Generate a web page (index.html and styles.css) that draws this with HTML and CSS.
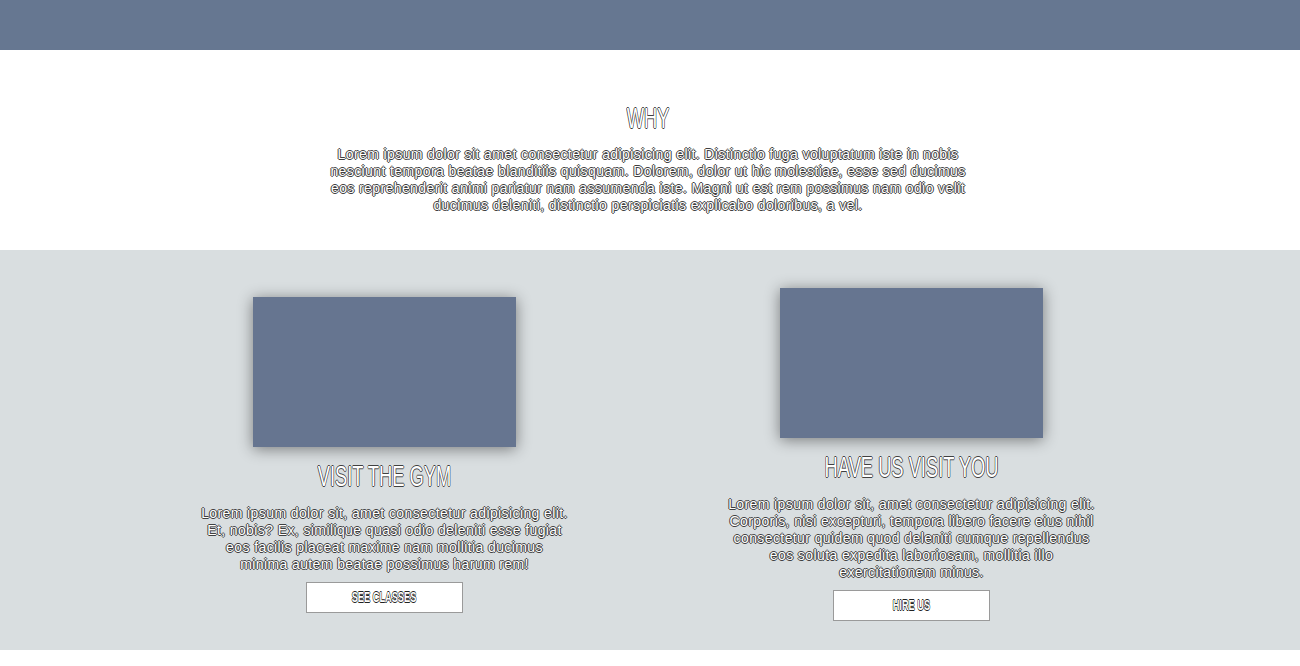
FILE: index.html
```html
<!DOCTYPE html>
<html lang="en">
<head>
<meta charset="utf-8">
<title>Why</title>
<link rel="stylesheet" href="styles.css">
</head>
<body>
<header class="topbar"></header>
<section class="why">
  <h2 class="title"><span class="narrow">WHY</span></h2>
  <p class="lead">Lorem ipsum dolor sit amet consectetur adipisicing elit. Distinctio fuga voluptatum iste in nobis nesciunt tempora beatae blanditiis quisquam. Dolorem, dolor ut hic molestiae, esse sed ducimus eos reprehenderit animi pariatur nam assumenda iste. Magni ut est rem possimus nam odio velit ducimus deleniti, distinctio perspiciatis explicabo doloribus, a vel.</p>
</section>
<section class="services">
  <div class="service-grid">
    <article class="card">
      <div class="card-image"></div>
      <h3 class="title"><span class="narrow">VISIT THE GYM</span></h3>
      <p class="card-text">Lorem ipsum dolor sit, amet consectetur adipisicing elit. Et, nobis? Ex, similique quasi odio deleniti esse fugiat eos facilis placeat maxime nam mollitia ducimus minima autem beatae possimus harum rem!</p>
      <a class="btn" href="#"><span class="narrow">SEE CLASSES</span></a>
    </article>
    <article class="card">
      <div class="card-image"></div>
      <h3 class="title"><span class="narrow">HAVE US VISIT YOU</span></h3>
      <p class="card-text">Lorem ipsum dolor sit, amet consectetur adipisicing elit. Corporis, nisi excepturi, tempora libero facere eius nihil consectetur quidem quod deleniti cumque repellendus eos soluta expedita laboriosam, mollitia illo exercitationem minus.</p>
      <a class="btn" href="#"><span class="narrow">HIRE US</span></a>
    </article>
  </div>
</section>
</body>
</html>
```

FILE: styles.css
```css
html, body {
  margin: 0;
  padding: 0;
  background: #ffffff;
}

body {
  font-family: "Liberation Sans", Arial, sans-serif;
  font-size: 14px;
  line-height: 17px;
  color: #ffffff;
}

.title,
.lead,
.card-text {
  color: #ffffff;
  text-shadow: -1px 0 #404040, 1px 0 #404040, 0 -1px #404040, 0 1px #404040;
}

.topbar {
  height: 50px;
  background: #667791;
}

.why {
  padding: 50px 4px 36px 0;
  display: flex;
  flex-direction: column;
  align-items: center;
}

.title {
  margin: 0;
  font-family: "Liberation Sans", sans-serif;
  font-weight: normal;
  font-size: 30px;
  line-height: 36px;
  text-align: center;
  white-space: nowrap;
}

.narrow {
  display: inline-block;
  transform: scaleX(0.61);
  transform-origin: center;
}

.lead,
.card-text {
  letter-spacing: 0.4px;
}

.lead {
  margin: 10px 0 0;
  width: 648px;
  text-align: center;
}

.services {
  background: #d9dee0;
  padding: 38px 4px 29px 0;
}

.service-grid {
  width: 1054px;
  margin: 0 auto;
  display: grid;
  grid-template-columns: 1fr 1fr;
  align-items: center;
}

.card {
  display: flex;
  flex-direction: column;
  align-items: center;
}

.card-image {
  width: 263px;
  height: 150px;
  background: #667590;
  box-shadow: 0 2px 14px rgba(0, 0, 0, 0.45);
}

.card .title {
  margin-top: 11px;
}

.card-text {
  margin: 11px 0 0;
  width: 368px;
  text-align: center;
}

.btn {
  margin-top: 9px;
  box-sizing: border-box;
  width: 157px;
  height: 31px;
  display: flex;
  align-items: center;
  justify-content: center;
  background: #ffffff;
  border: 1px solid #9a9a9a;
  text-decoration: none;
  font-family: "Liberation Sans", sans-serif;
  font-weight: bold;
  font-size: 14px;
  color: #ffffff;
  text-shadow: -0.6px 0 #222, 0.6px 0 #222, 0 -0.6px #222, 0 0.6px #222;
}

.btn .narrow {
  transform: scaleX(0.66);
}
```
